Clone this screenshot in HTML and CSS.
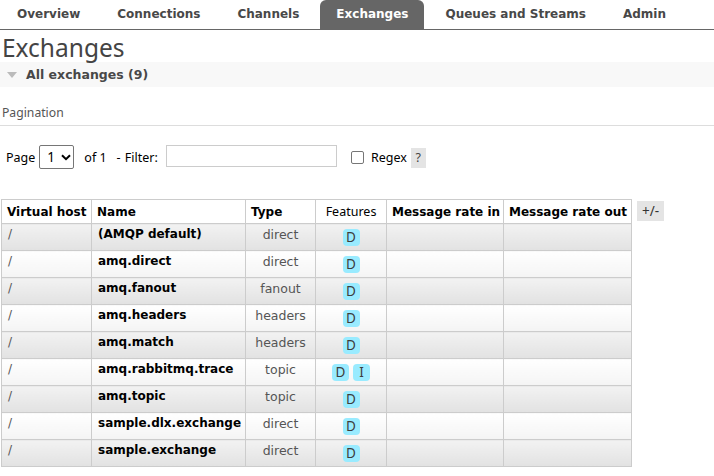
FILE: index.html
```html
<!DOCTYPE html>
<html>
<head>
<meta charset="utf-8">
<link rel="stylesheet" href="styles.css">
</head>
<body>
<ul class="tabs">
  <li><a>Overview</a></li>
  <li><a>Connections</a></li>
  <li><a>Channels</a></li>
  <li class="active"><a>Exchanges</a></li>
  <li><a>Queues and Streams</a></li>
  <li><a>Admin</a></li>
</ul>
<h1 class="title">Exchanges</h1>
<div class="section-head"><span class="tri"></span><span>All exchanges (9)</span></div>
<h3 class="pag-title">Pagination</h3>
<div class="pager">
  <span>Page</span>
  <span class="select"><span>1</span><svg width="10" height="7" viewBox="0 0 10 7"><path d="M1 1.2 L5 5.2 L9 1.2" fill="none" stroke="#000" stroke-width="2"/></svg></span>
  <span class="of">of 1</span>
  <span class="flt">- Filter:</span>
  <span class="input"></span>
  <span class="check"></span>
  <span>Regex</span>
  <span class="help">?</span>
</div>
<div class="table-wrap">
<table class="list">
  <colgroup>
    <col class="c-vh"><col class="c-name"><col class="c-type"><col class="c-feat"><col class="c-in"><col class="c-out">
  </colgroup>
  <thead>
    <tr>
      <th>Virtual host</th>
      <th>Name</th>
      <th>Type</th>
      <th class="plain">Features</th>
      <th>Message rate in</th>
      <th>Message rate out</th>
    </tr>
  </thead>
  <tbody>
    <tr class="alt1"><td class="vh">/</td><td class="name">(AMQP default)</td><td class="type">direct</td><td class="feat"><span class="badge">D</span></td><td></td><td></td></tr>
    <tr class="alt2"><td class="vh">/</td><td class="name">amq.direct</td><td class="type">direct</td><td class="feat"><span class="badge">D</span></td><td></td><td></td></tr>
    <tr class="alt1"><td class="vh">/</td><td class="name">amq.fanout</td><td class="type">fanout</td><td class="feat"><span class="badge">D</span></td><td></td><td></td></tr>
    <tr class="alt2"><td class="vh">/</td><td class="name">amq.headers</td><td class="type">headers</td><td class="feat"><span class="badge">D</span></td><td></td><td></td></tr>
    <tr class="alt1"><td class="vh">/</td><td class="name">amq.match</td><td class="type">headers</td><td class="feat"><span class="badge">D</span></td><td></td><td></td></tr>
    <tr class="alt2"><td class="vh">/</td><td class="name">amq.rabbitmq.trace</td><td class="type">topic</td><td class="feat"><span class="badge">D</span><span class="badge">I</span></td><td></td><td></td></tr>
    <tr class="alt1"><td class="vh">/</td><td class="name">amq.topic</td><td class="type">topic</td><td class="feat"><span class="badge">D</span></td><td></td><td></td></tr>
    <tr class="alt2"><td class="vh">/</td><td class="name">sample.dlx.exchange</td><td class="type">direct</td><td class="feat"><span class="badge">D</span></td><td></td><td></td></tr>
    <tr class="alt1"><td class="vh">/</td><td class="name">sample.exchange</td><td class="type">direct</td><td class="feat"><span class="badge">D</span></td><td></td><td></td></tr>
  </tbody>
</table>
<span class="plusminus">+/-</span>
</div>
</body>
</html>
```

FILE: styles.css
```css
html, body {
  margin: 0;
  padding: 0;
  background: #fff;
}
body {
  font-family: "DejaVu Sans", Verdana, sans-serif;
  font-size: 12px;
  color: #000;
}
.tabs {
  list-style: none;
  margin: 0;
  padding: 0 0 0 1px;
  display: flex;
  height: 29px;
  border-bottom: 1px solid #666;
}
.tabs li {
  margin-right: 5px;
}
.tabs a {
  display: block;
  height: 29px;
  line-height: 28px;
  padding: 0 16px;
  font-weight: bold;
  font-size: 12px;
  color: #484848;
}
.tabs li.active a {
  background: #666;
  color: #fff;
  border-radius: 6px 6px 0 0;
}
.title {
  margin: 0;
  padding: 4px 0 0 2px;
  font-family: "Noto Sans", "Open Sans", sans-serif;
  font-weight: normal;
  font-size: 24.5px;
  line-height: 28px;
  color: #444;
}
.section-head {
  background: #f8f8f8;
  height: 25px;
  display: flex;
  align-items: center;
  font-weight: bold;
  font-size: 12.5px;
  color: #484848;
}
.tri {
  width: 0;
  height: 0;
  border-left: 5px solid transparent;
  border-right: 5px solid transparent;
  border-top: 6px solid #bbb;
  margin: 1px 9px 0 7px;
}
.pag-title {
  margin: 18px 0 0 0;
  padding: 0 0 4px 2px;
  font-family: "Noto Sans", "Open Sans", sans-serif;
  font-weight: normal;
  font-size: 12.2px;
  color: #555;
  border-bottom: 1px solid #ddd;
  line-height: 16px;
}
.pager {
  display: flex;
  align-items: center;
  margin: 19px 0 0 6px;
  font-family: "Noto Sans", "Open Sans", sans-serif;
  font-size: 12.5px;
  color: #000;
  height: 24px;
}
.select {
  box-sizing: border-box;
  width: 35px;
  height: 24px;
  border: 1px solid #767676;
  border-radius: 2px;
  margin-left: 4px;
  display: flex;
  align-items: center;
  padding-left: 7px;
  font-size: 13.5px;
  gap: 6px;
}
.of {
  margin-left: 10px;
}
.flt {
  margin-left: 10px;
  word-spacing: 1px;
}
.input {
  box-sizing: border-box;
  width: 171px;
  height: 22px;
  border: 1px solid #ccc;
  margin-left: 8px;
  margin-top: -2px;
}
.check {
  box-sizing: border-box;
  width: 13px;
  height: 13px;
  border: 1px solid #767676;
  border-radius: 2px;
  margin: 0 7px 0 14px;
}
.help {
  background: #e4e4e4;
  width: 15px;
  height: 20px;
  line-height: 20px;
  text-align: center;
  margin-left: 4px;
  margin-top: 2px;
  color: #444;
}
.table-wrap {
  display: flex;
  align-items: flex-start;
  margin: 30px 0 0 1px;
}
.list {
  border-collapse: collapse;
  border: 1px solid #ccc;
  table-layout: fixed;
  width: 630px;
}
.list th, .list td {
  border: 1px solid #ccc;
  padding: 0 6px;
  text-align: left;
  overflow: hidden;
}
.list th {
  height: 24px;
  box-sizing: border-box;
  font-weight: bold;
  font-size: 12px;
  background: #fff;
  white-space: nowrap;
  padding: 0 5px;
}
.list th.plain {
  font-weight: normal;
  font-family: "Noto Sans", "Open Sans", sans-serif;
  font-size: 12.5px;
  text-align: center;
}
.c-vh { width: 90px; }
.c-name { width: 154px; }
.c-type { width: 70px; }
.c-feat { width: 71px; }
.c-in { width: 117px; }
.c-out { width: 128px; }
.list td {
  height: 27px;
  vertical-align: top;
  padding-top: 3px;
  box-sizing: border-box;
  line-height: 15px;
  white-space: nowrap;
}
.alt1 td {
  background: linear-gradient(#f2f2f2, #e2e2e2);
}
.alt2 td {
  background: linear-gradient(#fff, #f4f4f4);
}
.vh {
  color: #555;
}
.name {
  font-weight: bold;
  font-size: 12px;
}
.type {
  color: #555;
  text-align: center !important;
  font-size: 12.5px;
}
.feat {
  text-align: center !important;
  padding-top: 5px !important;
}
.badge {
  display: inline-block;
  background: #99ebff;
  border-radius: 4px;
  min-width: 17px;
  height: 17px;
  line-height: 17px;
  padding: 0 1px;
  box-sizing: border-box;
  font-family: "Noto Sans", "Open Sans", sans-serif;
  font-size: 13.5px;
  color: #3c3c3c;
  margin: 0 2px;
  text-align: center;
}
.plusminus {
  background: #e4e4e4;
  font-family: "Noto Sans", "Open Sans", sans-serif;
  font-size: 13.5px;
  padding: 0 5px;
  height: 20px;
  line-height: 20px;
  margin: 2px 0 0 5px;
  color: #333;
}
```
